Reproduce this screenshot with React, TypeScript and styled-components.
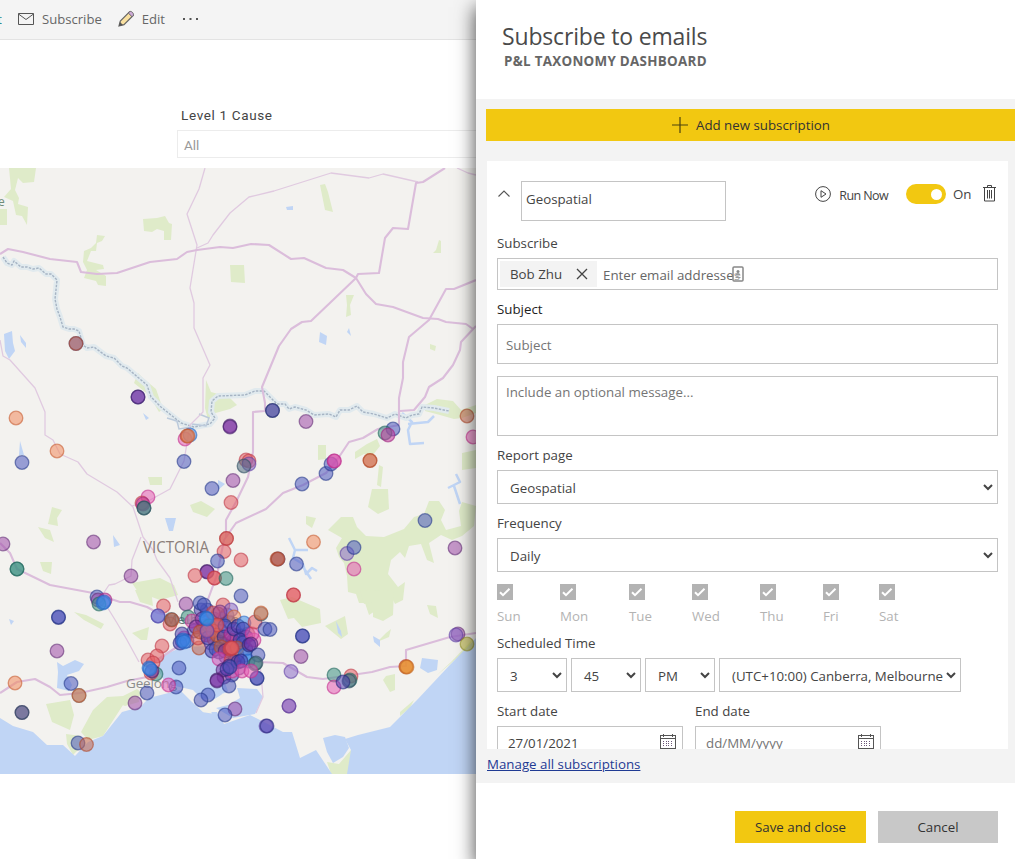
import React from "react";
import styled, { createGlobalStyle } from "styled-components";

const GlobalStyle = createGlobalStyle`
  * { box-sizing: border-box; }
  body { margin: 0; background: #fff; overflow: hidden; }
  #root { font-family: "Open Sans", "Noto Sans", sans-serif; font-size: 13.3px; color: #444; }
`;

const Page = styled.div`
  display: grid;
  grid-template-columns: 476px 539px;
  width: 1015px;
  height: 859px;
  overflow: hidden;
`;
const Report = styled.main`
  display: flex;
  flex-direction: column;
  min-width: 0;
  overflow: hidden;
`;
const Toolbar = styled.div`
  display: flex;
  align-items: center;
  height: 40px;
  flex: none;
  background: #f4f4f4;
  border-bottom: 1px solid #e3e3e3;
  color: #666;
  font-size: 13.1px;
  padding-bottom: 2px;
`;
const Tool = styled.div<{ $gap: number; $after: number }>`
  display: flex;
  align-items: center;
  gap: ${(p) => p.$gap}px;
  margin-right: ${(p) => p.$after}px;
  line-height: 20px;
  svg { display: block; }
`;
const Clipped = styled.span`
  width: 2px;
  margin-right: 16px;
  display: flex;
  justify-content: flex-end;
  overflow: hidden;
  color: #2b8a8a;
`;
const Slicer = styled.section`
  margin-left: 177px;
  padding-top: 65px;
  height: 128px;
  flex: none;
`;
const SlicerTitle = styled.div`
  font: 400 13.5px/20px Roboto, sans-serif;
  letter-spacing: 0.65px;
  color: #444;
  padding-left: 4px;
  height: 25px;
`;
const SlicerBox = styled.div`
  height: 28px;
  border: 1px solid #ececec;
  border-right: 0;
  padding-left: 6px;
  font: 13.5px/29px Roboto, sans-serif;
  color: #999;
`;
const MapCanvas = styled.svg`
  display: block;
  flex: none;
  background: #f3f2ef;
`;

const Drawer = styled.aside`
  position: relative;
  display: flex;
  flex-direction: column;
  background: #fff;
  box-shadow: 0 8px 18px 1px rgba(0, 0, 0, 0.68);
`;
const Header = styled.header`
  height: 99px;
  flex: none;
  padding: 21px 0 0 26px;
`;
const Title = styled.h1`
  margin: 0;
  font-size: 23px;
  line-height: 31px;
  font-weight: 400;
  letter-spacing: -0.17px;
  color: #4a4a4a;
`;
const Subtitle = styled.div`
  font-size: 13.4px;
  font-weight: 700;
  line-height: 18px;
  letter-spacing: 0.29px;
  padding-left: 2px;
  color: #666;
`;
const Body = styled.div`
  display: flex;
  flex-direction: column;
  height: 684px;
  padding: 10px 0 0 10px;
  background: #f3f3f3;
`;
const AddButton = styled.button`
  display: flex;
  align-items: center;
  justify-content: center;
  gap: 8px;
  flex: none;
  height: 32px;
  border: 0;
  padding: 0 0 0 1px;
  background: #f2c811;
  color: #333;
  font: inherit;
`;
const Card = styled.section`
  height: 588px;
  flex: none;
  margin: 20px 7px 0 1px;
  padding: 20px 10px 0;
  background: #fff;
  overflow: hidden;
`;
const CardHead = styled.div`
  display: flex;
  height: 40px;
  margin-bottom: 12px;
`;
const Caret = styled.div`
  width: 24px;
  padding-top: 3px;
`;
const Actions = styled.div`
  display: flex;
  align-items: center;
  height: 26px;
  margin-left: auto;
  svg { display: block; }
`;
const RunNow = styled.span`
  margin: 2px 18px 0 8px;
  font-size: 12.5px;
  letter-spacing: -0.6px;
`;
const Toggle = styled.span`
  display: flex;
  align-items: center;
  justify-content: flex-end;
  width: 40px;
  height: 20px;
  padding-right: 4px;
  border-radius: 10px;
  background: #f2c811;
  &::after { content: ""; width: 11px; height: 11px; border-radius: 50%; background: #fff; }
`;
const OnText = styled.span`
  width: 19px;
  margin: 0 11px 0 7px;
`;
const Trash = styled.svg`
  margin: -1px 2px 0 0;
`;
const Label = styled.div<{ $top?: number; $dark?: boolean }>`
  height: 20px;
  line-height: 20px;
  margin: ${(p) => p.$top ?? 9}px 0 5px;
  color: ${(p) => (p.$dark ? "#222" : "#444")};
`;
const Field = styled.div<{ $h: number; $w?: number; $pad?: number; $muted?: boolean }>`
  display: flex;
  align-items: center;
  justify-content: space-between;
  flex: none;
  height: ${(p) => p.$h}px;
  width: ${(p) => (p.$w ? `${p.$w}px` : "auto")};
  padding: 2px 0 0 ${(p) => p.$pad ?? 8}px;
  border: 1px solid #c4c4c4;
  background: #fff;
  white-space: nowrap;
  color: ${(p) => (p.$muted ? "#757575" : "#444")};
`;
const NameField = styled(Field)`
  padding: 0 0 4px 4px;
`;
const PeopleField = styled(Field)`
  justify-content: flex-start;
  padding: 0 0 0 2px;
  color: #666;
`;
const Chip = styled.span`
  display: flex;
  align-items: center;
  width: 97px;
  height: 26px;
  padding: 0 9px 0 10px;
  justify-content: space-between;
  margin-right: 6px;
  background: #f3f3f3;
  color: #444;
`;
const Placeholder = styled.span`
  padding-top: 2px;
`;
const AutofillMark = styled.svg`
  margin-left: -8px;
`;
const Message = styled(Field)`
  align-items: flex-start;
  margin-top: 12px;
  padding-top: 6px;
`;
const SelectField = styled(Field)`
  padding-right: 4px;
  svg { margin-top: -2px; }
`;
const Days = styled.div`
  display: flex;
  margin-top: 12px;
`;
const Day = styled.div<{ $w: number }>`
  width: ${(p) => p.$w}px;
  color: #b3b3b3;
  line-height: 20px;
  svg { display: block; margin-bottom: 6px; }
`;
const Row = styled.div<{ $gap: number }>`
  display: flex;
  gap: ${(p) => p.$gap}px;
`;
const DateField = styled(Field)`
  padding-top: 0;
  padding-right: 6px;
  svg { margin-top: -3px; }
`;
const ManageLink = styled.a`
  margin: 6px 0 0 1px;
  line-height: 18px;
  color: #1f3a93;
  text-decoration: underline;
`;
const Footer = styled.footer`
  display: flex;
  justify-content: flex-end;
  gap: 12px;
  padding: 28px 17px 0 0;
`;
const Button = styled.button<{ $w: number; $primary?: boolean }>`
  width: ${(p) => p.$w}px;
  height: 32px;
  border: 0;
  padding: 0;
  font: inherit;
  color: #333;
  background: ${(p) => (p.$primary ? "#f2c811" : "#c8c8c8")};
`;

const Chevron = () => (
  <svg width="10" height="7" viewBox="0 0 10 7"><path d="M1 1l4 4 4-4" fill="none" stroke="#444" strokeWidth="2" /></svg>
);
const Calendar = () => (
  <svg width="16" height="15" viewBox="0 0 16 15" shapeRendering="crispEdges">
    <path d="M.5 1.5h15v13H.5zM.5 4.5h15M3.5 0v3M12.5 0v3" fill="none" stroke="#555" />
    <path d="M3 7.500h10M3 9.500h10M3 11.500h10" stroke="#6b5577" strokeDasharray="1 1.500" fill="none" />
  </svg>
);
const Check = () => (
  <svg width="16" height="16" viewBox="0 0 16 16"><path fill="#b3b3b3" d="M0 0h16v16H0z" /><path d="M3 8.200l3 3 6.500-6.400" fill="none" stroke="#fff" strokeWidth="2" /></svg>
);
const Dropdown = ({ text, w, pad = 12 }: { text: string; w?: number; pad?: number }) => (
  <SelectField $h={34} $w={w} $pad={pad}><span>{text}</span><Chevron /></SelectField>
);

const tones: Record<string, [string, string]> = {
  n: ["#4a58bd", "#273a8c"],
  d: ["#4c3fb0", "#252a7c"],
  p: ["#9c4aa8", "#653078"],
  v: ["#7b30a3", "#46206b"],
  l: ["#8a6bc9", "#6041a5"],
  r: ["#e25c63", "#c03a48"],
  o: ["#f08a5c", "#c85d32"],
  b: ["#c4674c", "#b04a2c"],
  k: ["#e35cb4", "#c4318f"],
  m: ["#c4379f", "#a02580"],
  t: ["#3a9081", "#20685e"],
  s: ["#4f6c80", "#2e4f61"],
  u: ["#3a8bea", "#2667c4"],
  y: ["#b0ac2e", "#94902a"],
  g: ["#e8962c", "#c56b28"],
};

const pins =
  "76,343.500,n 76,343.500,b 138,397,d 138,397,v 16,418,o 57,451,o 22,462.500,n 230,426,v 230,427,v 272.500,410.500,s 272.500,410.500,d 306,421.500,p 467,416,b 393,429,n 385,433,t 388,435,m 473,437,k " +
  "185,439,k 190,435,u 187,436,b 188,436,o 184,461.500,n 148,497,k 142,503,r 143,504,m 144,508,t 144,508,s 212,488.500,n 233,480.500,p 231,502.500,r 246,460,r 249,461,r 249,464,l 244,466,s 93.500,542,p 3,544,p 17,569,t 17,569,t 131,576,p " +
  "302,484,n 326,473.500,n 331,464,n 334,461,m 334.500,461,k 370,460.500,o 370,460.500,b 425,520.500,n 455,548,p 313.500,542,o 278,559,d 277,559,b 278,559,b 296.500,564,n 347,553.500,l 354,547.500,n 354,569,k 293.500,595,r 293.500,595,r 241,560,r 241,596,n " +
  "226.500,538.500,b 226.500,538.500,r 224,551.500,r 217.500,561,n 207,571.500,v 207,572,v 195,575.500,r 214.500,578,r 214.500,578,r 226,578.500,t 97,597,n 98,600,p 105,600,m 99,604,t 103,603,u 104,602,u 58.500,617.500,d 58.500,617,n 57,651,p " +
  "15,683,o 71,683.500,n 79,695.500,s 79,695.500,o 22,712.500,v 22,712.500,s 78,743,n 86.500,744.500,b 163.500,606,r 170,624,r 158,616,u 158,616,l 171.500,619.500,s 172,620,b 162,646,r 148,660,r 157,656,r 153,663,r 156,674,t 151,673,r 152,671,v 149,668,u 150,669,u " +
  "186,604,p 200,603,n 204,605,n 223,605,r 188,617,t 192,621,k 218,614,b 231,610,l 234,617,o 184,638,k 182,634,d 182,641,n 180,643,d 187,641,n 183,640,u 184,642,u 202,619,v 207,619,u 213,613,r 220,612,p 196,627,v 209,626,t 198,638,r 200,632,b 208,638,d 216,626,r 213,631,r 217,635,b 225,626,n 224,637,d 231,634,m 234,629,d 238,626,d 244,623,u 243,629,d 240,640,d 243,643,n 254,640,k 252,634,k 255,622,r 261,614,s 261,613,o 265,629,n 270,629.500,n 212,651,d 216,649,n 221,647,b 225,651,v 219,659,k 231,660,r 230,649,r 237,648,b 245,655,u 248,661,u 249,645,d 251,644,v 258,655,n 255,664,t 256,663,s 229,666,v 232,671,k 223,670,v 227,669,d 238,662,d 241,661,d 242,671,k 230,667,n 217,680,v 217,681,v 229,686,n 257,678.500,d 257,678,n 251,671,k " +
  "179,668,n 176,687,n 168.500,685,k 147,693,n 135,703,p 208,695,n 201,700,n 235,709,p 225,715,n 266,726,l 267,726,d 302.500,636,d 302.500,636,n 301,656.500,p 291,671.500,l 289,706,p 289,706,l 334,675,t 334,687,k 351,676,r 350,680,t 349,681,s 343,682,d 406,666.500,r 406,667,g 407,667,g 458,634,p 456,635,l 467,644,y " +
  "217,625,r 207,630,r 207,631,l 231,648,r 232,648,r 206,618,u 207,619,u";

const smallDense =
  "207,610,d 214,619,n 222,619,k 229,622,d 199,648,b 211,643,l 224,644,n 236,636,n 248,634,b 246,649,d 241,636,u 226,657,d 237,655,v 206,635,m 214,639,r 219,642,b 233,641,d 239,668,p 232,675,d 224,677,v 201,610,d 227,615,n 235,646,n 194,631,n 203,626,b 221,631,v 212,622,u 230,640,r 219,652,d 228,648,b 246,637,v 234,662,d";

const drawPins = (list: string) =>
  list.split(" ").map((item, i) => {
    const [x, y, tone] = item.split(",");
    const [fill, stroke] = tones[tone];
    return <circle key={i} cx={x} cy={y} r="6.800" fill={fill} fillOpacity="0.55" stroke={stroke} strokeOpacity="0.6" strokeWidth="1.300" />;
  });

const parks = [
  "M9 168h27l-2 14-11 1-5-5-3 12 4 8-1 6 10 3-1 18-5-9-6-1-3-14-9-4 7-8z",
  "M0 209h7v16H0z",
  "M143 219l14-1 8-2 4 7 3 1-1 16h-7v-9l-7-2-5 3-8-1z",
  "M97 235l8 1-3 5-5 2-1 8-5 0-4 10 16 4 1 4-8 1 10 6v10l-8-1-2-4-12-3 3-8-4-8 1-11 7-3 5-5z",
  "M230 265h14l1 18-14-1z",
  "M320 185l5-1 3 8 5 20-8-2z M346 295l8 0-4 10 1 10-5 2 1-12z M436 250l3-10 2 1v12l-8 0z M430 344l6 2-1 5-5-2z",
  "M138 373l6 6 12 10 7 20-4 3-10-17-15-12z",
  "M206 380l5 12 18 5 8 8-7 4-18 5-4 6-3-12z",
  "M425 405l12-6 16 2 8 9 15-5v8l-14 5-8 1-14-4-15-4z",
  "M318 445l8 0v14l-8 1z M355 452l12-8 10-5 3 7-8 10-8-2-9 5z M379 465l4 2-2 20-4-2z M462 453l14-3v18l-14 2z",
  "M372 489h16l1 20-11 5-10-7z",
  "M341 517l12 0 4 10 9 9 18 1 20-8 10-12 10-3 5-13 10 0 6 9-4 10 5 10 15-4-2-15 3-9 14 4-2 20-12 10-10 4-11-5-12 8 5 20-7-3-6-16-12 2-4 12-5-6-9 8-3 14 10 13 7-5-2 18-8 4-4-8-8 10-14 9-4-12-6 0-3-9-8-2-1-16-3-13-5-6-3-9 6-10-14-8z",
  "M306 516l10 2-4 10-6-4z M343 530l5 2-4 8-4-4z",
  "M360 590l34 1-1 24-10 6-10-4 0-15-9 2z M427 605l9 1 2 12-8-4z M280 600l12-3 28 12 1 14-19 4-8-9-6 1z M325 626l20-10 3 18-7 5z",
  "M190 505l11-4 14 8-8 8-14-5z M52 507l10 3-5 8 1 8-10-2z M38 527l12 3 4 12-9-4z M40 562l12 0-1 12-8-3z M148 477h14v8h-12z",
  "M132 583l28-5 14 7 4 10-18 5-22-8z M135 590l16 0 2 16-13-4z M132 633l17-6-2 13-6 0z M74 612l12 3 18 9-3 5-17-9z",
  "M46 704l24-4 4 15-4 15-18-8z M81 732l12-22 14-13 16-1 14-7 6 5-20 11-20 31-15 4z M66 734l15 2 0 11-8 8-6-11z",
  "M331 774l-4-12 12 2 12-14 0 12-2 12z",
  "M386 676l9-2 0 16-5 2-7-12z",
  "M240 692l18 2 1 7-15 1z M400 712l14-12-4 8-10 8z",
  "M120 704l18-10 1 8-14 4z M436 676l15-14 22-23-5 9-19 17z M386 633l5-4-2 8-12 5z M352 745l8-1 4 2-8 3z",
];

const majorRoads = [
  "M0 254L8 249 23 252 50 259 77 262 81 272 97 274 117 273 150 262 177 259 187 252 197 250 220 247 233 248 251 244 269 245 291 259 304 258 326 268 343 270 356 278 366 294 376 304 393 307 423 318 438 319 446 322 466 324 473 329",
  "M356 278L358 274 379 273 385 238 393 228 408 229 416 183 423 182 445 168",
  "M356 278L333 300 311 321 302 322 291 329 279 346 262 387 265 403 265 411 253 412V452L248 477 236 502 226 520 226 537",
  "M476 280L454 289 446 289 429 320 409 337 403 362 403 378 399 398 399 425 378 429 363 438 349 442 339 457 326 473 303 485 283 493 266 509 236 523 224 540 217 575 207 602",
  "M476 326L461 342 460 350 453 365 443 378 429 387 425 397 414 410 400 411",
  "M0 543L10 553 17 569 50 585 93 593 120 602 130 602 147 607 158 613 190 620",
  "M0 693L17 682 35 679 50 687 60 695 80 693 107 687 127 681 147 677 157 660 183 643 200 630",
  "M258 662L283 663 307 677 323 679 345 676 372 672 390 667 406 666 406 650 450 637 476 633",
];
const minorRoads = [
  "M205 168L199 189 187 214 197 245 190 288 194 303 194 328 210 365 203 378 203 412 190 425 188 437 184 461 170 489 150 500 132 506",
  "M197 248L208 243 213 235 230 213 249 197 274 191 331 173 369 178 383 174 418 182",
  "M0 340L3 356 10 360 35 388 45 412V435L53 440 60 454 78 462 87 474 117 492 133 507 138 522 143 537 153 550 157 560 170 578 178 602",
  "M141 537L132 560 131 576 115 584 109 585 101 597 117 623 127 640 139 662",
  "M260 663L263 697 256 713",
  "M457 168L468 173 476 175",
];
const river =
  "M3 257l4 6 5 2 2-4 7 6 6 0 6 2 6-1 7 6 5 0 6 6-1 10-1 9 2 10 3 8 3 10 6 2 5 0 5 2 4 14 4 3 7-1 12 9 8 2 8 8 5 2 20 17 4 12 10 10 10 8 10 8 13 4 16-3 5-6-4-6 1-11 6-5 27-1 10-4 9 0 8 8 5 5 8 0 4 5 6-2 11 3 8 5 15-1 7 3 4-7 9 0 8-4 6 6 11 2 13 4 8-4 11 4 6-3 7-1 3-7 12 1 15 3";

const FieldMap = () => (
  <MapCanvas width="476" height="606" viewBox="0 168 476 606">
    <g fill="#dfebc9">{parks.map((d) => <path key={d} d={d} />)}</g>
    <g fill="#c0d5f5">
      <path d="M0 718L13 726 33 732 47 745H63L75 756 88 742 103 736 122 712 140 707 149 698 180 690 192 702 203 712 217 712 224 724 250 715 260 720 283 732 292 732 300 758 316 750 332 774H0z" />
      <path d="M347 774L351 750 345 739 358 735 390 727 417 700 447 668 478 636V774z" />
      <path d="M323 738L335 735 345 737 349 748 343 757 333 763 327 752z" />
      <path d="M157 668l5-12 20-9 28-1 14 12-1 20 5 13-17 10-9-2-9-9-27-6z" />
      <path d="M216 708l12-3 12-7-3-10 20 1 6 8-8 17-22 4z" />
      <path d="M4 334l8-3 1 12 2 8-6 8-4-8z M20 335l6 8 0 5-5-6z M320 332l7 4-1 9-7-3z M286 207l7-1 0 4-6 0z M349 328l2 8-4-4z" />
      <path d="M20 441l4 14-5 0z M113 535l7 10-6 2z M165 518l11 0-3 13-4 0z M218 480l7 4-7 6z M143 413l6 5-3 2z M9 619l5 2-3 4z" />
      <path d="M57 662l6 4 12-6 9 4-5 7-12 4 5 10-3 6-12-3 1-16z M422 658l16 2-1 10-9 3-8-5z M373 636l7 4 0 7-6-5z M336 621l5 10 1 6-4-4z" />
    </g>
    <path d="M192 697l12 14 6 1-4-12 10 2 8-8" fill="none" stroke="#f3f2ea" strokeWidth="2.500" />
    <g fill="none" stroke="#c0d5f5" strokeWidth="2.500" strokeLinejoin="round">
      <path d="M289 538l6 12-2 8 10 6 3 10 6-6 5 3M296 550l12 0M303 567l8 12M402 413l10 9-4 8 2 14 14-1M408 424l20-2 6-6M448 488l12-6-4-8M454 486l6 18" />
    </g>
    <path d={river} fill="none" stroke="#e1eaee" strokeWidth="6" strokeLinejoin="round" />
    <path d={river} fill="none" stroke="#a6b4c4" strokeWidth="1.400" strokeDasharray="2.500 1.300" strokeLinejoin="round" />
    <path d="M167 418l10 3 2 8 12-2M192 424l14 2 3-8-10-4" fill="none" stroke="#bccadb" strokeWidth="1.500" />
    <g fill="none" stroke="#e0cae0" strokeWidth="1.300" strokeLinejoin="round">{minorRoads.map((d) => <path key={d} d={d} />)}</g>
    <g fill="none" stroke="#dbbddb" strokeWidth="2.100" strokeLinejoin="round">{majorRoads.map((d) => <path key={d} d={d} />)}</g>
    <g fontFamily='"Open Sans", sans-serif'>
      <text x="143" y="553" fontSize="15.500" fill="#8b7f7b" textLength="66" lengthAdjust="spacingAndGlyphs">VICTORIA</text>
      <text x="126" y="688" fontSize="13.500" fill="#8d8d8d" textLength="51">Geelong</text>
      <text x="165" y="624" fontSize="13.500" fill="#777" textLength="74">Melbourne</text>
      <text x="-2" y="206" fontSize="12" fill="#6f8c78">e</text>
    </g>
    {drawPins(smallDense)}
    {drawPins(pins)}
  </MapCanvas>
);

const days: [string, number][] = [["Sun", 63], ["Mon", 69], ["Tue", 63], ["Wed", 68], ["Thu", 63], ["Fri", 56], ["Sat", 40]];

export default function App() {
  return (
    <Page>
      <GlobalStyle />
      <Report>
        <Toolbar>
          <Clipped>t</Clipped>
          <Tool $gap={8} $after={16}>
            <svg width="16" height="12" viewBox="0 0 16 12"><path d="M.5.5h15v11H.5zM.5 1L8 6.500 15.500 1" fill="none" stroke="#555" /></svg>
            Subscribe
          </Tool>
          <Tool $gap={7} $after={18}>
            <svg width="17" height="17" viewBox="0 0 17 17">
              <path d="M1 16l1.300-5L11.500 1.800l3.700 3.700L6 14.700z" fill="#f9e0a0" stroke="#666" strokeWidth="1.200" />
              <path d="M11.500 1.800c1.500-1.500 5 1.700 3.700 3.700l-1.200 1.200L10.300 3z" fill="#cfabd8" stroke="#666" />
              <path d="M1 16l1-4 3 3z" fill="#555" />
            </svg>
            Edit
          </Tool>
          <svg width="16" height="4" viewBox="0 0 16 4"><path d="M0 1h2v2H0zM6.500 1h2v2h-2zM13 1h2v2h-2z" fill="#555" /></svg>
        </Toolbar>
        <Slicer>
          <SlicerTitle>Level 1 Cause</SlicerTitle>
          <SlicerBox>All</SlicerBox>
        </Slicer>
        <FieldMap />
      </Report>
      <Drawer>
        <Header>
          <Title>Subscribe to emails</Title>
          <Subtitle>P&amp;L TAXONOMY DASHBOARD</Subtitle>
        </Header>
        <Body>
          <AddButton>
            <svg width="16" height="16" viewBox="0 0 16 16"><path d="M8 0v16M0 8h16" stroke="#4b430f" strokeWidth="1.200" /></svg>
            Add new subscription
          </AddButton>
          <Card>
            <CardHead>
              <Caret><svg width="14" height="9" viewBox="0 0 14 9"><path d="M1.500 7.500L7 2l5.500 5.500" fill="none" stroke="#555" strokeWidth="1.100" /></svg></Caret>
              <NameField $h={40} $w={205}>Geospatial</NameField>
              <Actions>
                <svg width="16" height="16" viewBox="0 0 16 16"><circle cx="8" cy="8" r="7.400" fill="none" stroke="#444" /><path d="M6 4.700v6.600L11 8z" fill="none" stroke="#444" /></svg>
                <RunNow>Run Now</RunNow>
                <Toggle />
                <OnText>On</OnText>
                <Trash width="13" height="17" viewBox="0 0 13 17"><path d="M0 2.500h13M4.500 2.500v-2h4v2M1.500 2.500v13.500h10V2.500M4.500 5v8.500M6.500 5v8.500M8.500 5v8.500" fill="none" stroke="#444" /></Trash>
              </Actions>
            </CardHead>
            <Label $top={0}>Subscribe</Label>
            <PeopleField $h={32}>
              <Chip>
                Bob Zhu
                <svg width="12" height="12" viewBox="0 0 12 12"><path d="M1 1l10 10M11 1L1 11" stroke="#444" strokeWidth="1.300" /></svg>
              </Chip>
              <Placeholder>Enter email addresses</Placeholder>
              <AutofillMark width="12" height="16" viewBox="0 0 12 16">
                <rect x="1" y="1" width="10" height="14" rx="1" fill="#fff" fillOpacity="0.400" stroke="#888" strokeWidth="1.500" />
                <circle cx="6" cy="5.500" r="1.500" fill="#888" /><path d="M3.500 9.500c0-3 5-3 5 0zM3.500 11h5v1h-5z" fill="#999" />
              </AutofillMark>
            </PeopleField>
            <Label $dark>Subject</Label>
            <Field $h={40} $muted>Subject</Field>
            <Message $h={60} $muted>Include an optional message...</Message>
            <Label>Report page</Label>
            <Dropdown text="Geospatial" />
            <Label>Frequency</Label>
            <Dropdown text="Daily" />
            <Days>
              {days.map(([name, w]) => <Day key={name} $w={w}><Check />{name}</Day>)}
            </Days>
            <Label $top={7}>Scheduled Time</Label>
            <Row $gap={4}>
              <Dropdown text="3" w={70} />
              <Dropdown text="45" w={70} />
              <Dropdown text="PM" w={70} />
              <Dropdown text="(UTC+10:00) Canberra, Melbourne" w={242} />
            </Row>
            <Row $gap={12}>
              <div>
                <Label>Start date</Label>
                <DateField $h={34} $w={186} $pad={10}>27/01/2021<Calendar /></DateField>
              </div>
              <div>
                <Label>End date</Label>
                <DateField $h={34} $w={186} $pad={10} $muted>dd/MM/yyyy<Calendar /></DateField>
              </div>
            </Row>
          </Card>
          <ManageLink>Manage all subscriptions</ManageLink>
        </Body>
        <Footer>
          <Button $w={131} $primary>Save and close</Button>
          <Button $w={120}>Cancel</Button>
        </Footer>
      </Drawer>
    </Page>
  );
}
